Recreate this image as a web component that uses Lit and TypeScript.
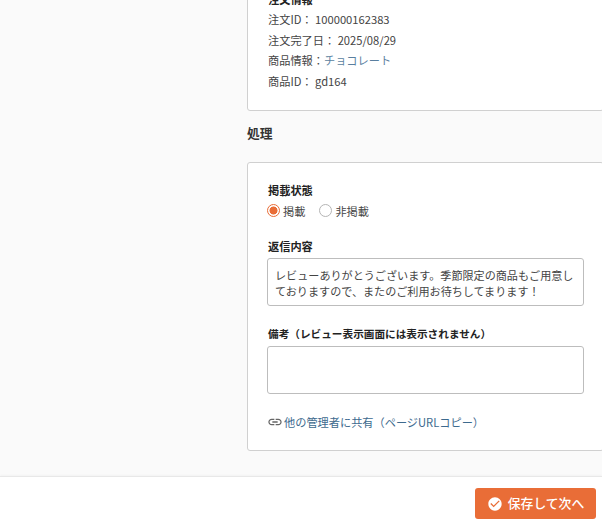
import { LitElement, html, css } from "lit";
import { customElement } from "lit/decorators.js";

@customElement("app-root")
export class AppRoot extends LitElement {
  static styles = css`
    :host {
      display: flex;
      flex-direction: column;
      height: 524px;
      width: 602px;
      overflow: hidden;
      background: #fafafa;
      font-family: "Noto Sans CJK JP", "Noto Sans", sans-serif;
      font-size: 11.2px;
      color: #333;
    }
    .content {
      height: 476px;
      flex: none;
      display: flex;
      flex-direction: column;
      justify-content: flex-end;
      align-items: flex-start;
      padding: 0 0 25px 247px;
      box-sizing: border-box;
      overflow: hidden;
    }
    .card {
      width: 357px;
      flex: none;
      box-sizing: border-box;
      background: #fff;
      border: 1px solid #d0d0d0;
      border-radius: 3px;
      padding: 0 19px;
    }
    .info { padding-bottom: 18px; }
    .info-title { font-weight: 700; line-height: 20px; font-size: 11.2px; color: #222; padding-left: 1px; }
    .row { line-height: 20.8px; color: #444; white-space: nowrap; padding-left: 1px; }
    .link { color: #5a7f9f; }
    .heading {
      font-size: 12.8px;
      font-weight: 700;
      color: #333;
      line-height: 20px;
      margin: 12px 0 19px;
    }
    .form { padding-top: 19px; padding-bottom: 20px; }
    .label { font-weight: 700; font-size: 11.2px; line-height: 16px; color: #222; display: block; padding-left: 1px; }
    .label.small { font-size: 10.65px; }
    .radios { display: flex; align-items: center; gap: 14px; height: 17px; margin-top: 4px; }
    .radio { display: flex; align-items: center; gap: 3px; color: #444; }
    .dot {
      width: 13px; height: 13px; box-sizing: border-box;
      border-radius: 50%; border: 1px solid #b5b5b5; background: #fff;
    }
    .dot.on {
      border-color: #e96d37;
      background: radial-gradient(circle, #e96d37 0 3.7px, #fff 4.3px);
    }
    .field { margin-top: 19px; }
    .field.notes { margin-top: 20px; }
    textarea {
      display: block;
      width: 317px;
      box-sizing: border-box;
      margin: 4px 0 0;
      padding: 8px 4px 0 7px;
      border: 1px solid #bdbdbd;
      border-radius: 3px;
      font: inherit;
      font-size: 11.1px;
      line-height: 16px;
      color: #444;
      resize: none;
      overflow: hidden;
      background: #fff;
      outline: none;
    }
    .reply { height: 48px; }
    .note { height: 48px; }
    .share {
      display: flex; align-items: center; gap: 1px;
      margin-top: 19px; line-height: 16px; color: #3d6a8e;
    }
    .share svg { width: 16px; height: 16px; flex: none; margin-top: 1px; }
    .footer {
      flex: 1;
      background: #fff;
      border-top: 1px solid #e8e8e8;
      box-shadow: 0 -1px 2px rgba(0,0,0,.03);
      display: flex;
      justify-content: flex-end;
      align-items: flex-start;
      padding: 11px 6px 0 0;
    }
    .save {
      width: 121px; height: 31px;
      border: 0; border-radius: 3px;
      background: #e96d37; color: #fff;
      font: inherit; font-size: 12.8px; font-weight: 500;
      display: flex; align-items: center; justify-content: center; gap: 5px;
      padding: 0 0 2px;
    }
    .save svg { width: 16px; height: 16px; flex: none; margin-top: 2px; }
  `;

  render() {
    const reply =
      "レビューありがとうございます。季節限定の商品もご用意しておりますので、またのご利用お待ちしてまります！";
    return html`
      <div class="content">
        <section class="card info">
          <div class="info-title">注文情報</div>
          <div class="row">注文ID： 100000162383</div>
          <div class="row">注文完了日： 2025/08/29</div>
          <div class="row">商品情報：<span class="link">チョコレート</span></div>
          <div class="row">商品ID： gd164</div>
        </section>
        <h2 class="heading">処理</h2>
        <section class="card form">
          <span class="label">掲載状態</span>
          <div class="radios">
            <div class="radio"><span class="dot on"></span>掲載</div>
            <div class="radio"><span class="dot"></span>非掲載</div>
          </div>
          <div class="field">
            <label class="label">返信内容</label>
            <textarea class="reply" .value=${reply}></textarea>
          </div>
          <div class="field notes">
            <label class="label small">備考（レビュー表示画面には表示されません）</label>
            <textarea class="note"></textarea>
          </div>
          <div class="share">
            <svg viewBox="0 0 24 24" fill="#666"><path d="M3.9 12c0-1.71 1.39-3.1 3.1-3.1h4V7H7c-2.76 0-5 2.24-5 5s2.24 5 5 5h4v-1.9H7c-1.71 0-3.1-1.39-3.1-3.1zM8 13h8v-2H8v2zm9-6h-4v1.9h4c1.71 0 3.1 1.39 3.1 3.1s-1.39 3.1-3.1 3.1h-4V17h4c2.76 0 5-2.24 5-5s-2.24-5-5-5z"/></svg>
            <span>他の管理者に共有（ページURLコピー）</span>
          </div>
        </section>
      </div>
      <footer class="footer">
        <button class="save">
          <svg viewBox="0 0 24 24" fill="#fff"><path d="M12 2C6.48 2 2 6.48 2 12s4.48 10 10 10 10-4.48 10-10S17.52 2 12 2zm-2 15-5-5 1.41-1.41L10 14.17l7.59-7.59L19 8l-9 9z"/></svg>
          保存して次へ
        </button>
      </footer>
    `;
  }
}
